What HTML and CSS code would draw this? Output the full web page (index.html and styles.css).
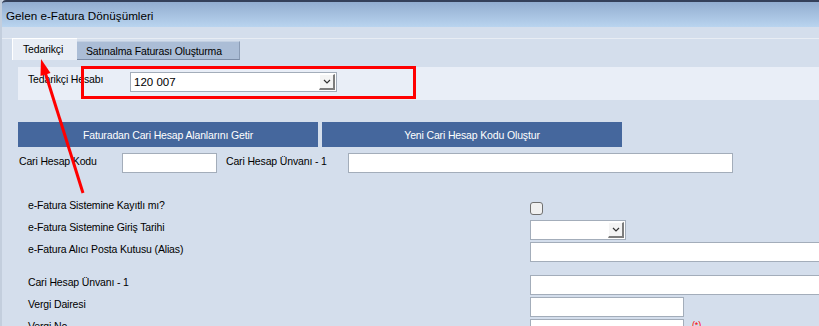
FILE: index.html
```html
<!DOCTYPE html>
<html lang="tr">
<head>
  <meta charset="UTF-8">
  <title>Gelen e-Fatura Dönüşümleri</title>
  <link rel="stylesheet" href="styles.css">
</head>
<body>

  <!-- pencere -->
  <div class="window">
    <div class="titlebar">Gelen e-Fatura Dönüşümleri</div>

    <!-- sekmeler -->
    <div class="tabbar">
      <div class="tab active">Tedarikçi</div>
      <div class="tab">Satınalma Faturası Oluşturma</div>
    </div>

    <div class="panel">
      <!-- tedarikçi hesabı -->
      <div class="account-row">
        <label class="account-label">Tedarikçi Hesabı</label>
        <div class="combo account-combo">
          <span class="combo-value">120 007</span>
          <span class="combo-btn"><svg width="8" height="5" viewBox="0 0 8 5"><path d="M1 1 L4 4 L7 1" fill="none" stroke="#333" stroke-width="1.2"/></svg></span>
        </div>
      </div>

      <!-- işlem butonları -->
      <div class="button-row">
        <button class="action-btn">Faturadan Cari Hesap Alanlarını Getir</button>
        <button class="action-btn">Yeni Cari Hesap Kodu Oluştur</button>
      </div>

      <div class="code-row">
        <label class="code-label">Cari Hesap Kodu</label>
        <input type="text" class="field code-field">
        <label class="title-label">Cari Hesap Ünvanı - 1</label>
        <input type="text" class="field title-field">
      </div>

      <!-- e-fatura bilgileri -->
      <div class="form-grid">
        <label>e-Fatura Sistemine Kayıtlı mı?</label>
        <div class="cell"><span class="checkbox"></span></div>

        <label>e-Fatura Sistemine Giriş Tarihi</label>
        <div class="cell">
          <div class="combo date-combo">
            <span class="combo-value"></span>
            <span class="combo-btn"><svg width="8" height="5" viewBox="0 0 8 5"><path d="M1 1 L4 4 L7 1" fill="none" stroke="#333" stroke-width="1.2"/></svg></span>
          </div>
        </div>

        <label>e-Fatura Alıcı Posta Kutusu (Alias)</label>
        <div class="cell"><input type="text" class="field wide-field"></div>

        <div class="spacer"></div>
        <div class="spacer"></div>

        <label>Cari Hesap Ünvanı - 1</label>
        <div class="cell"><input type="text" class="field wide-field"></div>

        <label>Vergi Dairesi</label>
        <div class="cell"><input type="text" class="field short-field"></div>

        <label>Vergi No</label>
        <div class="cell"><input type="text" class="field short-field"><span class="required">(*)</span></div>
      </div>
    </div>

    <!-- ekran görüntüsü üzerindeki işaretler -->
    <div class="highlight-box"></div>
    <svg class="arrow" width="819" height="326" viewBox="0 0 819 326">
      <line x1="83" y1="193" x2="45" y2="72" stroke="#ff0000" stroke-width="3"/>
      <polygon points="41,59 50.5,73 40.5,76" fill="#ff0000"/>
    </svg>
  </div>

</body>
</html>
```

FILE: styles.css
```css
body {
  margin: 0;
  padding: 0;
  width: 819px;
  height: 326px;
  overflow: hidden;
  background-color: #d4deec;
  font-family: "Liberation Sans", Arial, sans-serif;
  font-size: 10.5px;
  letter-spacing: -0.15px;
  color: #000;
}

.window {
  position: relative;
  height: 326px;
  border-left: 2px solid #c3cedd;
}

.titlebar {
  height: 25px;
  border-top: 2px solid #34405a;
  background: linear-gradient(#92add0, #b9d4ef);
  padding-left: 4px;
  font-size: 11.7px;
  letter-spacing: 0;
  line-height: 28px;
  color: #000;
  border-top-left-radius: 4px;
}

/* sekmeler */
.tabbar {
  display: flex;
  align-items: flex-end;
  height: 21px;
  margin-top: 11px;
  padding-left: 10px;
  border-top: 1px solid #e8edf4;
}

.tab {
  width: 163px;
  height: 19px;
  line-height: 19px;
  padding-left: 9px;
  background-color: #abbdd6;
  border-top: 1px solid #c3d0e2;
  border-right: 1px solid #8a9bb4;
  border-bottom: 1px solid #7b8ca6;
  box-sizing: border-box;
}

.tab.active {
  height: 22px;
  width: 65px;
  padding-left: 10px;
  background-color: #e8edf5;
  border-top: 1px solid #fff;
  border-left: 1px solid #fff;
  border-right: none;
  border-bottom: none;
  line-height: 20px;
}

.panel {
  padding-top: 7px;
}

/* tedarikçi hesabı */
.account-row {
  display: flex;
  align-items: flex-start;
  height: 33px;
  margin-left: 16px;
  padding-left: 10px;
  background-color: #e9eef7;
}

.account-label {
  width: 102px;
  padding-top: 6px;
  line-height: 13px;
}

.combo {
  display: flex;
  align-items: center;
  height: 20px;
  box-sizing: border-box;
  background-color: #fff;
  border: 1px solid #a3adba;
}

.account-combo {
  width: 207px;
  margin-top: 5px;
}

.combo-value {
  flex: 1;
  padding-left: 3px;
  font-size: 11.5px;
  letter-spacing: 0;
}

.combo-btn {
  display: flex;
  align-items: center;
  justify-content: center;
  width: 16px;
  height: 16px;
  margin-right: 1px;
  box-sizing: border-box;
  background-color: #f4f4f4;
  border-top: 1px solid #fff;
  border-left: 1px solid #fff;
  border-right: 2px solid #7d7d7d;
  border-bottom: 2px solid #7d7d7d;
}

/* butonlar */
.button-row {
  display: flex;
  gap: 4px;
  margin: 22px 0 0 16px;
}

.action-btn {
  width: 300px;
  height: 25px;
  border: none;
  background-color: #45679d;
  color: #fff;
  font-family: "Liberation Sans", Arial, sans-serif;
  font-size: 10.5px;
  letter-spacing: -0.15px;
  padding: 0;
}

.code-row {
  display: flex;
  align-items: flex-start;
  margin: 6px 0 0 17px;
}

.code-label {
  width: 103px;
  line-height: 14px;
  padding-top: 1px;
}

.title-label {
  width: 122px;
  margin-left: 9px;
  line-height: 14px;
  padding-top: 1px;
}

.field {
  height: 20px;
  box-sizing: border-box;
  border: 1px solid #a3adba;
  background-color: #fff;
  margin: 0;
  padding: 0 3px;
  outline: none;
}

.code-field {
  width: 95px;
}

.title-field {
  width: 385px;
}

/* e-fatura formu */
.form-grid {
  display: grid;
  grid-template-columns: 502px 320px;
  grid-template-rows: 20px 20px 20px 9px 20px 20px 20px;
  row-gap: 2px;
  margin: 25px 0 0 26px;
}

.form-grid label {
  line-height: 14px;
}

.form-grid .cell {
  display: flex;
  align-items: center;
}

.checkbox {
  width: 13px;
  height: 13px;
  box-sizing: border-box;
  border: 1px solid #707070;
  border-radius: 3px;
  background-color: #f0f0f0;
}

.date-combo {
  width: 96px;
}

.wide-field {
  width: 320px;
}

.short-field {
  width: 154px;
}

.required {
  align-self: flex-start;
  margin: 1px 0 0 8px;
  color: #ff0000;
  font-size: 9px;
}

/* kırmızı işaretler */
.highlight-box {
  position: absolute;
  left: 79px;
  top: 66px;
  width: 335px;
  height: 33px;
  box-sizing: border-box;
  border: 3px solid #ff0000;
}

.arrow {
  position: absolute;
  left: -2px;
  top: 0;
  pointer-events: none;
}
```
